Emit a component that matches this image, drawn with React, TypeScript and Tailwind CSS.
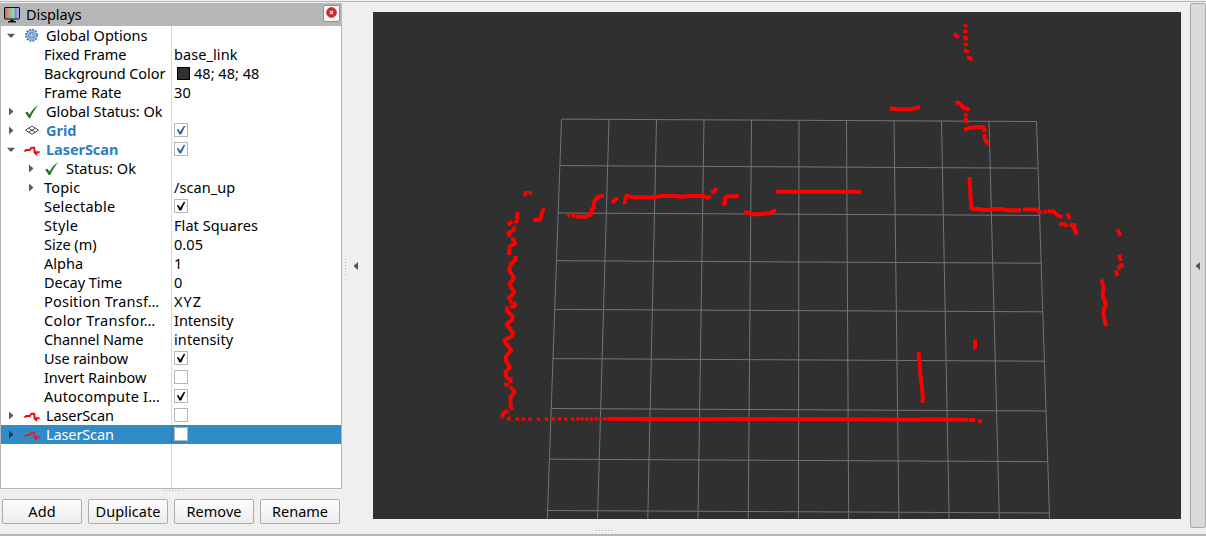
import React, { useLayoutEffect, useRef } from "react";

/** Text set to a given advance width by spreading its letters. */
function Fit({ text, w, className = "" }: { text: string; w: number; className?: string }) {
  const ref = useRef<HTMLSpanElement>(null);
  useLayoutEffect(() => {
    const el = ref.current;
    if (!el) return;
    el.style.letterSpacing = "0px";
    const natural = el.getBoundingClientRect().width;
    el.style.letterSpacing = `${(w - natural) / text.length}px`;
  }, [text, w]);
  return (
    <span ref={ref} className={`whitespace-nowrap ${className}`}>
      {text}
    </span>
  );
}

type IconName = "gear" | "check" | "grid" | "laser";
type Row = {
  label: string;
  w: number;
  level?: 0 | 1;
  arrow?: "open" | "closed";
  icon?: IconName;
  bold?: boolean;
  selected?: boolean;
  value?: string;
  vw?: number;
  swatch?: boolean;
  box?: "blue" | "black" | "empty";
};

const rows: Row[] = [
  { label: "Global Options", w: 101.5, level: 0, arrow: "open", icon: "gear" },
  { label: "Fixed Frame", w: 82.5, value: "base_link", vw: 63.5 },
  { label: "Background Color", w: 121.3, value: "48; 48; 48", vw: 65.3, swatch: true },
  { label: "Frame Rate", w: 77.5, value: "30", vw: 17 },
  { label: "Global Status: Ok", w: 116.5, level: 0, arrow: "closed", icon: "check" },
  { label: "Grid", w: 30.5, level: 0, arrow: "closed", icon: "grid", bold: true, box: "blue" },
  { label: "LaserScan", w: 72.3, level: 0, arrow: "open", icon: "laser", bold: true, box: "blue" },
  { label: "Status: Ok", w: 70, level: 1, arrow: "closed", icon: "check" },
  { label: "Topic", w: 36.5, level: 1, arrow: "closed", value: "/scan_up", vw: 61.3 },
  { label: "Selectable", w: 71.3, box: "black" },
  { label: "Style", w: 34.3, value: "Flat Squares", vw: 84 },
  { label: "Size (m)", w: 52.5, value: "0.05", vw: 29 },
  { label: "Alpha", w: 39.3, value: "1", vw: 8.5 },
  { label: "Decay Time", w: 78.2, value: "0", vw: 8.5 },
  { label: "Position Transf…", w: 115.5, value: "XYZ", vw: 28 },
  { label: "Color Transfor…", w: 111.5, value: "Intensity", vw: 59.3 },
  { label: "Channel Name", w: 99.3, value: "intensity", vw: 59.3 },
  { label: "Use rainbow", w: 84, box: "black" },
  { label: "Invert Rainbow", w: 102.3, box: "empty" },
  { label: "Autocompute I…", w: 115.8, box: "black" },
  { label: "LaserScan", w: 67.8, level: 0, arrow: "closed", icon: "laser", box: "empty" },
  { label: "LaserScan", w: 67.8, level: 0, arrow: "closed", icon: "laser", box: "empty", selected: true },
];

function Icon({ name, selected }: { name: IconName; selected?: boolean }) {
  if (name === "gear")
    return (
      <svg width="16" height="16" viewBox="0 0 16 16">
        <circle cx="7.5" cy="7.3" r="5.7" fill="none" stroke="#3d73b9" strokeWidth="1.8" strokeDasharray="1.8 1.184" />
        <circle cx="7.5" cy="7.3" r="4.9" fill="#a9c7eb" stroke="#5b8ccb" strokeWidth="0.8" />
        <circle cx="7.5" cy="7.3" r="2.9" fill="none" stroke="#4b7fc2" strokeWidth="0.9" />
        <circle cx="7.5" cy="7.3" r="1.2" fill="#f1f7ff" stroke="#5586c4" strokeWidth="0.8" />
      </svg>
    );
  if (name === "check")
    return (
      <svg width="16" height="16" viewBox="0 0 16 16">
        <path d="M1.1 8.4 3.5 7.7 5.5 10.6C7.4 6.8 10.2 3.4 14.4 0.9 11 4.7 8.4 9.2 6.3 13.9L4.7 13.9Z" fill="#237a25" />
      </svg>
    );
  if (name === "grid")
    return (
      <svg width="16" height="16" viewBox="0 0 16 16" fill="none" stroke="#484848" strokeWidth="1">
        <path d="M1.4 7.2 8 3.1 14.6 7.2 8 11.3ZM4.7 9.3 11.3 5.2M4.7 5.2 11.3 9.3" />
      </svg>
    );
  return (
    <svg width="16" height="16" viewBox="0 0 16 16">
      <path
        d="M0.5 9.6 2.2 8.1H5.6L7.5 5.8H10.2L10.7 10.8 12.2 12V10.2H15.6"
        fill="none"
        stroke={selected ? "#cf2936" : "#fa0505"}
        strokeWidth="2"
      />
    </svg>
  );
}

function Arrow({ kind, selected }: { kind: "open" | "closed"; selected?: boolean }) {
  return (
    <svg width="20" height="19" viewBox="0 0 20 19" className="shrink-0">
      <path
        d={kind === "open" ? "M6 7.7H14L10.7 11.5H9.3Z" : "M8 5.5 12 9V10L8 13.5Z"}
        fill={selected ? "#183d56" : "#5c5c5c"}
      />
    </svg>
  );
}

function CheckBox({ kind }: { kind: "blue" | "black" | "empty" }) {
  return (
    <svg width="14" height="14" viewBox="0 0 14 14" className="mb-px">
      <rect x="0.5" y="0.5" width="13" height="13" fill="#fff" stroke="#b6b6b6" />
      {kind !== "empty" && (
        <path
          d="M2.8 6.4 4.4 6 6.1 8.7 9.9 2.8 11.3 3 7.2 11.4 5.5 11.4Z"
          fill={kind === "blue" ? "#2465a5" : "#080808"}
        />
      )}
    </svg>
  );
}

function TreeRow({ row }: { row: Row }) {
  const { selected } = row;
  const tone = selected ? "text-white" : row.bold ? "font-bold text-[#2d7dc5]" : "text-black";
  return (
    <div className={`flex h-[19px] shrink-0 items-center ${selected ? "bg-[#308cc6]" : ""}`}>
      <div className={`flex h-full w-[171px] items-center border-r ${selected ? "border-[#2c7eb2]" : "border-[#dadada]"}`}>
        {row.arrow ? (
          <>
            {row.level === 1 && <div className="w-5 shrink-0" />}
            <Arrow kind={row.arrow} selected={selected} />
            {row.icon && (
              <div className="mr-[6px] ml-[3px] flex h-4 w-4 shrink-0 items-center">
                <Icon name={row.icon} selected={selected} />
              </div>
            )}
            {!row.icon && <div className="w-[3px] shrink-0" />}
          </>
        ) : (
          <div className="w-[43px] shrink-0" />
        )}
        <Fit text={row.label} w={row.w} className={tone} />
      </div>
      <div className="flex items-center pl-[2px]">
        {row.box && <CheckBox kind={row.box} />}
        {row.swatch && <div className="mr-1 ml-[3px] size-[13px] border border-black bg-[#303030]" />}
        {row.value && <Fit text={row.value} w={row.vw ?? 10} className="text-black" />}
      </div>
    </div>
  );
}

const horizontals = [
  [561.5, 119.1, 1036.5, 121.5],
  [560, 165.6, 1038, 168.2],
  [558.2, 213, 1039.7, 215.4],
  [556.5, 260.7, 1041.5, 263.2],
  [555, 309.4, 1043, 311.8],
  [553, 358.6, 1044.7, 361.2],
  [551.3, 408.5, 1046.2, 411],
  [549.5, 459.2, 1048, 461.7],
  [547.5, 510.5, 1049.6, 513],
];
const verticals = Array.from({ length: 11 }, (_, i) => [561.5 + i * 47.5, 119.1 + i * 0.24, 547.3 + i * 50.23, 519]);

const scans = [
  // upper right
  "M965.5 24.2V27.6M965.3 29.8V33M965.3 36V38L966 40.5M965.6 42.6V46M964 50 968.8 52.2M967 57 972.7 59.8M954 33.5 958.4 38",
  "M890 108.7H894L898 109.2H912L917.5 107.8M916.7 107.3H920M955.5 102.8H959L964 108.3H967.5V111M965.7 113.3V116.5M965.7 117.5V120L968 123.5M964 129.3H967.5M967 128 972 128 976 127 983 127 985.5 132M984.5 134V139L989 145",
  // right wall
  "M969.5 177 971.3 209H979L985 210 1000 208.7 1007 210.2H1021.5M1023 209.5H1037L1039 212.2H1042M1043.5 211.8H1047M1048 211.2H1053.5L1057 215 1062.5 217M1067.3 213.5 1069.8 219M1059 224.2H1064L1067.5 226M1069.5 225.3H1076.5M1074 225V228L1077 235",
  "M1117.5 229.5 1120.5 235.5M1119.2 254.5 1120.8 261M1123.7 265.5H1120.5L1118 269M1115.7 270.5 1117.3 276M1101.7 279.5 1103.7 288 1102.5 295 1106 305 1104 308 1103.5 315 1106 326",
  // upper wall
  "M523.5 194.5H525.5V191M528.5 192.7H532M533 219.7H540.5L541.5 214 543.8 208M567 214.9H570.5M572 215.8H575M576 216.4 585 217 591.5 214.3V209L594 208V202L598 196.7 604 195.7M612 203 617.5 197.7M624.5 204 626 196H629L632 197.3H655L660 196H676L681 196.8 690 196H704L708 198.2 710.5 195.7M711 192.3 714 192.3 716.5 188M722 203.7H725.5L724.5 198 727 196.3H739",
  "M744 212 749 213 754 214.5 769 213.3 776 210M775.5 191.7H861",
  // left wall
  "M518 212 516.5 217 517.8 219 515 223.5M508 224.5 512 221.5M514 226.5V230L508 233 510 237M511 239H513L515.5 243.5 509.5 246.5 509 255M515.5 256V259.5L511 264 509 270 514 278 509.5 284 514.5 293 507.5 299M509.3 301.7H512.7M510 306.8 515.5 306 514 302M507 306.5V311L512.5 316V320L506.5 324 513 333 512.5 336 504 340 505.5 343 511.5 350 505.5 357 506 361 510 367 505 373 507 378 512.5 380M504 384 508.5 385.5M508.5 382 512 381M510 386.5 515 392 510.5 397V405L512 410M508.5 411.7H505L502.5 415V418.3M507.2 418.5H510.6",
  // bottom wall
  "M609 418.7 680 419.3 740 419 830 419.3 920 419.7 924 419.2 968 419.7M969 420H975M978 421.3H981.7",
  // inner objects
  "M918.5 352 920.5 375 923 398 922 402.8M975 339.5V349.2",
];
const dots = [
  517.2, 523.3, 530, 538.5, 546.5, 553.5, 559.5, 565.7, 572.5, 577.5, 582, 586.7, 591.3, 596, 600.5, 605, 609,
];

function Viewport() {
  return (
    <svg width="808" height="507" viewBox="373 12 808 507" className="block bg-[#303030]">
      <g stroke="#747474" strokeWidth="1">
        {[...horizontals, ...verticals].map(([x1, y1, x2, y2], i) => (
          <line key={i} x1={x1} y1={y1} x2={x2} y2={y2} />
        ))}
      </g>
      <g stroke="#ff0000" strokeWidth="3.9" fill="none" strokeLinejoin="bevel">
        {scans.map((d, i) => (
          <path key={i} d={d} />
        ))}
      </g>
      <g fill="#ff0000">
        {dots.map((x) => (
          <rect key={x} x={x - 1.7} y={417.2} width="3.4" height="3.4" />
        ))}
      </g>
    </svg>
  );
}

function Grip({ vertical }: { vertical?: boolean }) {
  return (
    <div className={`flex gap-[2px] ${vertical ? "flex-col" : ""}`}>
      {[0, 1, 2, 3, 4, 5].map((i) => (
        <div key={i} className="size-px bg-[#b0b0b0]" />
      ))}
    </div>
  );
}

function LeftArrow() {
  return (
    <svg width="4" height="8" viewBox="0 0 4 8">
      <path d="M4 0V8L0 4.5V3.5Z" fill="#555" />
    </svg>
  );
}

const buttons = [
  { label: "Add", w: 27.5 },
  { label: "Duplicate", w: 65 },
  { label: "Remove", w: 55 },
  { label: "Rename", w: 56 },
];

export default function App() {
  return (
    <div className="flex h-[536px] w-[1206px] flex-col overflow-hidden bg-[#efefef] font-['Noto_Sans',sans-serif] text-[14.5px] leading-[19px] text-black">
      <div className="h-[3px] shrink-0 pt-px">
        <div className="h-px bg-[#b6b6b4]" />
      </div>
      <div className="flex h-[531px] shrink-0">
        <aside className="flex w-[342px] shrink-0 flex-col">
          <header className="flex h-[23px] shrink-0 items-center bg-[#b6b6b6] pl-1">
            <svg width="16" height="16" viewBox="0 0 16 16">
              <defs>
                <linearGradient id="screen">
                  <stop offset="0" stopColor="#c85c5c" />
                  <stop offset="0.33" stopColor="#d6a0a0" />
                  <stop offset="0.34" stopColor="#6ccd6c" />
                  <stop offset="0.66" stopColor="#aee0ae" />
                  <stop offset="0.67" stopColor="#8080da" />
                  <stop offset="1" stopColor="#bcbcf0" />
                </linearGradient>
              </defs>
              <rect x="0.5" y="0.5" width="15" height="11.5" rx="0.5" fill="url(#screen)" stroke="#111" />
              <path d="M6.5 12.5H9.5V14H6.5ZM4 14.2 6 13.7H10L12 14.2V15.4H4Z" fill="#111" />
            </svg>
            <div className="ml-[6px] flex-1">
              <Fit text="Displays" w={55.7} />
            </div>
            <div className="mr-[2px] mb-[3px] flex size-[17px] items-center justify-center rounded-[2px] border border-[#8f8f8f] bg-[#f8f8f8]">
              <svg width="11" height="11" viewBox="0 0 11 11" className="mb-px">
                <circle cx="5.5" cy="5.5" r="4.9" fill="#cf2929" stroke="#b31d24" strokeWidth="0.7" />
                <path d="M3.9 3.9 7.1 7.1M7.1 3.9 3.9 7.1" stroke="#fbe4e4" strokeWidth="1.3" />
              </svg>
            </div>
          </header>
          <div className="flex h-[463px] shrink-0 flex-col border-r border-b border-l border-[#b6b6b6] bg-white">
            {rows.map((row, i) => (
              <TreeRow key={i} row={row} />
            ))}
            <div className="w-[171px] flex-1 border-r border-[#dadada]" />
          </div>
          <div className="flex h-[10px] shrink-0 justify-center pt-px">
            <Grip />
          </div>
          <div className="flex gap-[6px] pl-[2px]">
            {buttons.map((b) => (
              <button
                key={b.label}
                className="h-[25px] w-[80px] rounded-[2px] border border-[#acacac] bg-linear-to-b from-[#fdfdfd] to-[#ececec] text-center"
              >
                <Fit text={b.label} w={b.w} />
              </button>
            ))}
          </div>
        </aside>
        <div className="flex w-[31px] shrink-0 pt-[256px] pl-[3px]">
          <Grip vertical />
          <div className="pt-[3px] pl-2">
            <LeftArrow />
          </div>
        </div>
        <main className="flex w-[808px] shrink-0 flex-col pt-[9px]">
          <Viewport />
          <div className="pt-[11px] pl-[223px]">
            <Grip />
          </div>
        </main>
        <div className="ml-[9px] h-[525px] w-4 shrink-0 rounded-[2px] border border-[#a9a9a9] bg-[#dadada] pt-[258px] pl-[5px]">
          <LeftArrow />
        </div>
      </div>
      <div className="h-[2px] shrink-0 bg-[#b6b6b6]" />
    </div>
  );
}
